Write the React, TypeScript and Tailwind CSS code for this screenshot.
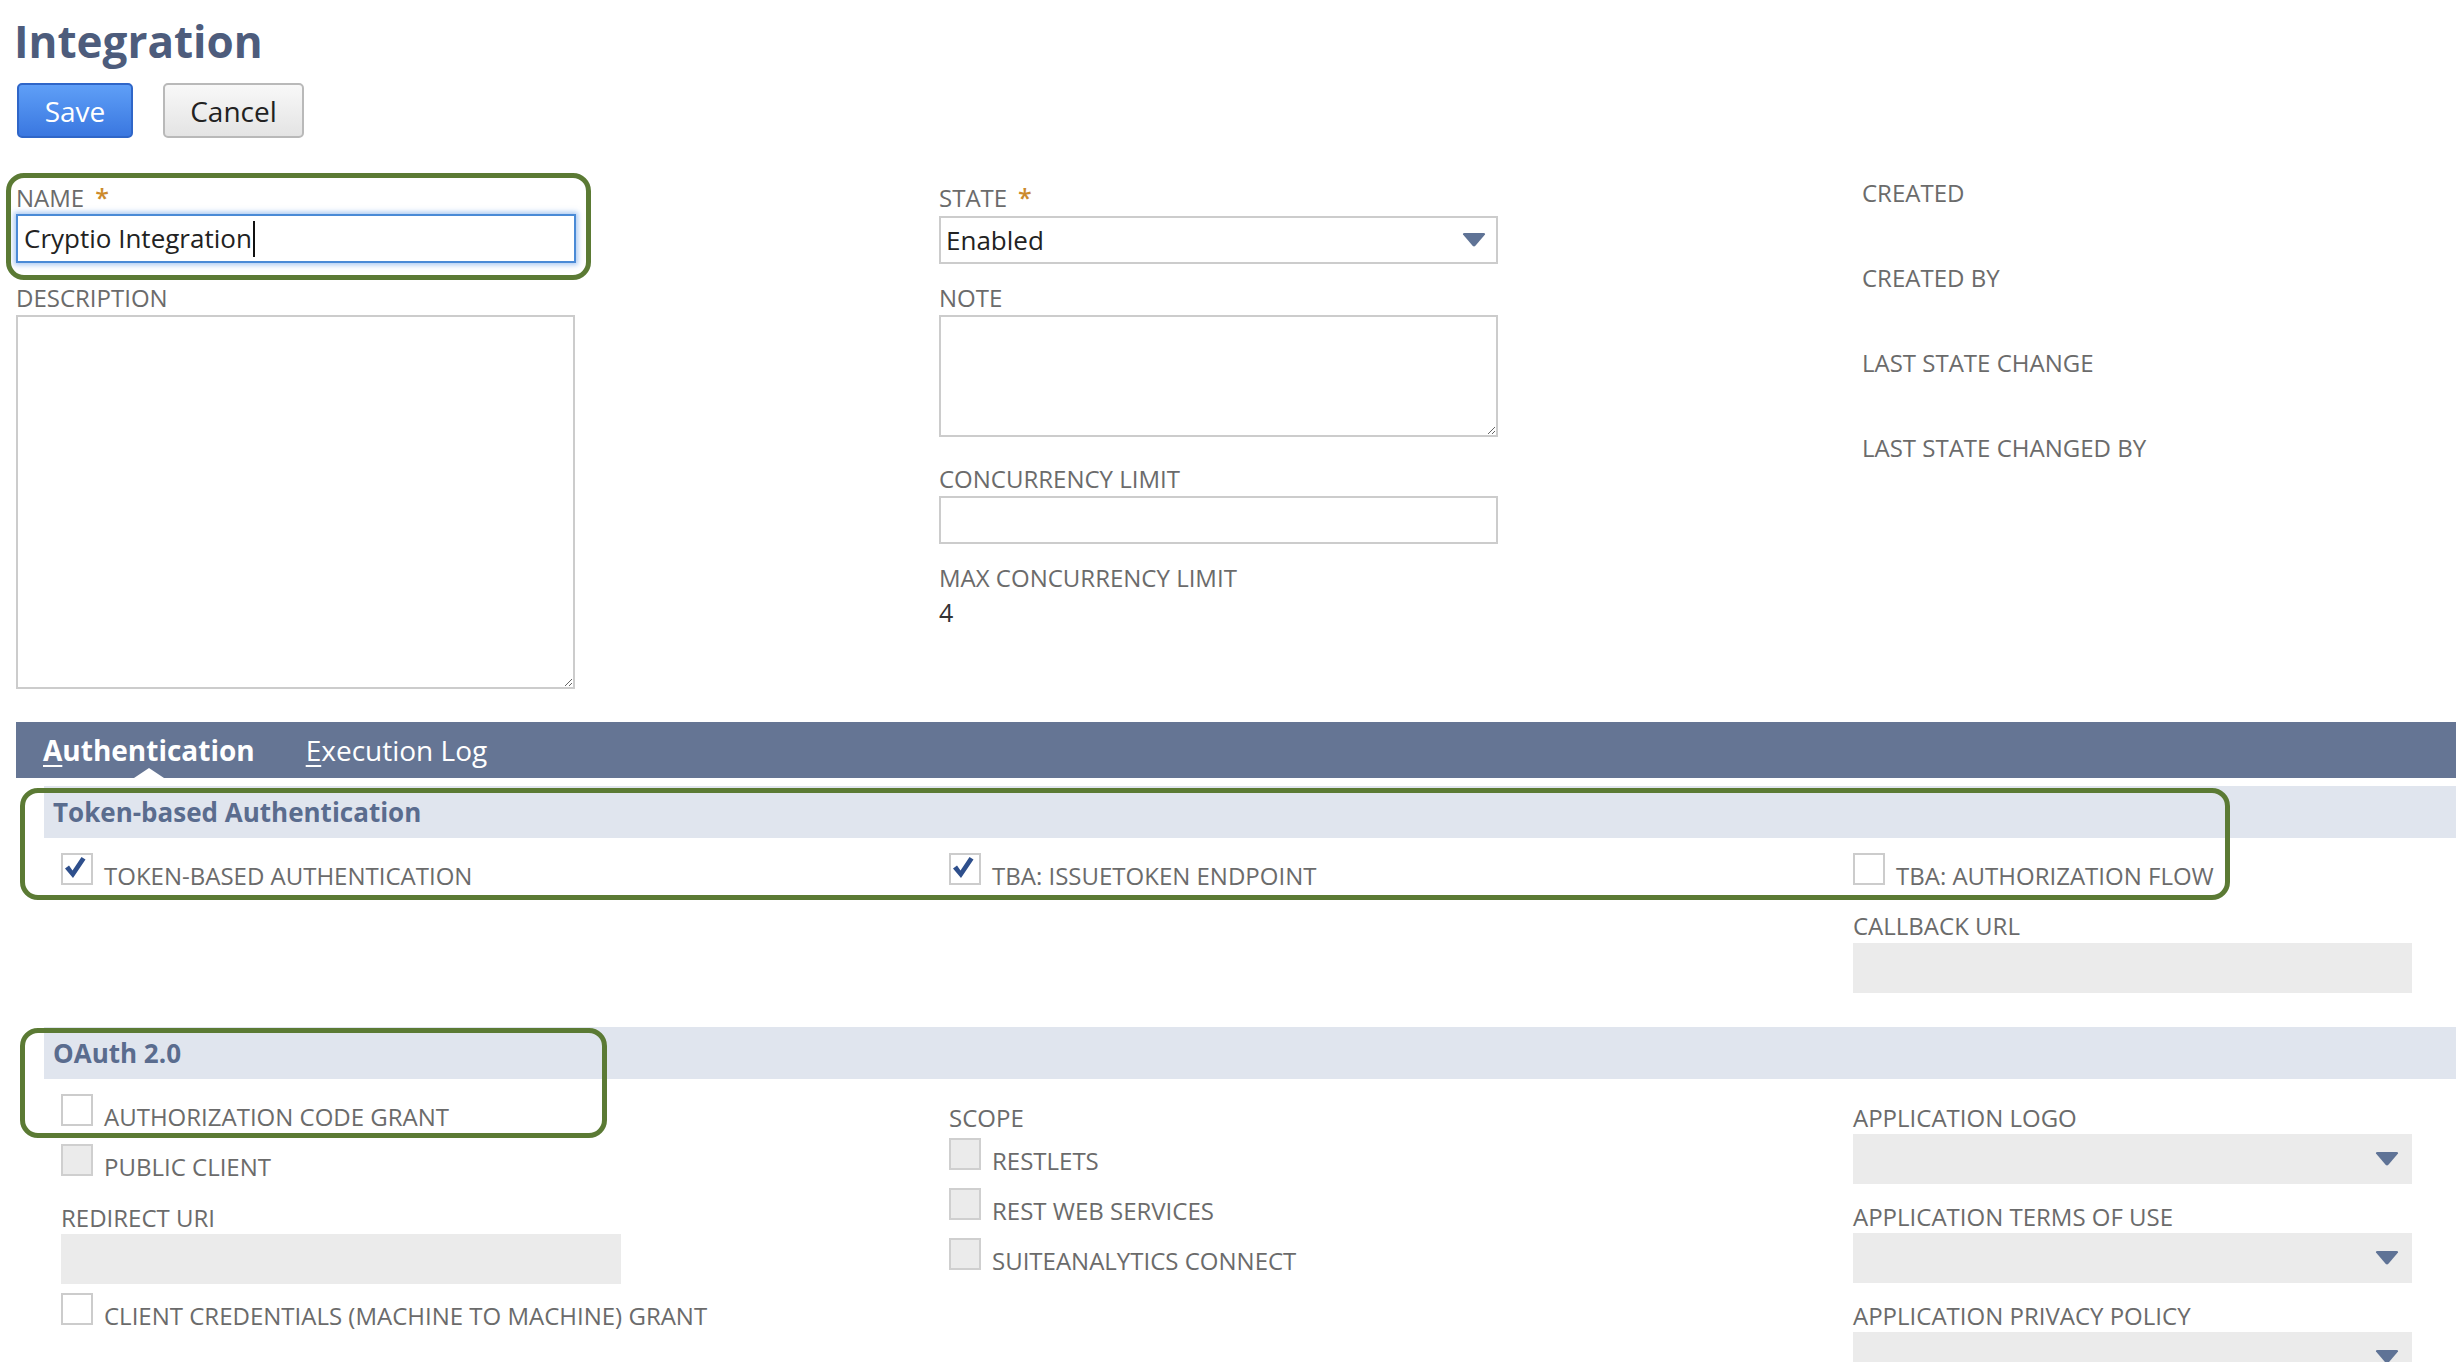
import React from 'react';

const labelCls = 'text-[24px] leading-[30px] text-[#6b6b6b] uppercase whitespace-nowrap';

function Label({ children, className = '' }: { children: React.ReactNode; className?: string }) {
  return <div className={`${labelCls} ${className}`}>{children}</div>;
}

function Required() {
  return <span className="ml-[11px] text-[25px] font-semibold text-[#cc8a2c]">*</span>;
}

function Arrow() {
  return (
    <svg width="24" height="14" viewBox="0 0 24 14">
      <path d="M1 1.5 Q0.5 0 2.5 0 L21.5 0 Q23.5 0 23 1.5 L13.4 12.8 Q12 14.2 10.6 12.8 Z" fill="#5f7396" />
    </svg>
  );
}

function Checkbox({ checked = false, disabled = false }: { checked?: boolean; disabled?: boolean }) {
  return (
    <div
      className={`relative h-[32px] w-[32px] shrink-0 border-2 ${
        disabled ? 'border-[#cfcfcf] bg-[#ebebeb]' : 'border-[#cccccc] bg-white'
      }`}
    >
      {checked ? (
        <svg className="absolute left-0 top-0" width="28" height="28" viewBox="0 0 28 28">
          <path d="M2 13.5 L6 10.5 L9.5 15.5 L18.5 2 L22.5 4.5 L10 23 Z" fill="#2e4f8c" />
        </svg>
      ) : null}
    </div>
  );
}

function CheckRow({
  label,
  checked,
  disabled,
  className = '',
}: {
  label: string;
  checked?: boolean;
  disabled?: boolean;
  className?: string;
}) {
  return (
    <div className={`flex items-end ${className}`}>
      <Checkbox checked={checked} disabled={disabled} />
      <span className="ml-[11px] text-[24px] leading-[18px] text-[#6b6b6b] uppercase whitespace-nowrap">
        {label}
      </span>
    </div>
  );
}

function GraySelect({ className = '' }: { className?: string }) {
  return (
    <div className={`flex h-[50px] w-[559px] items-center justify-end bg-[#ebebeb] pr-[13px] ${className}`}>
      <Arrow />
    </div>
  );
}

function SectionHeader({ title }: { title: string }) {
  return (
    <div className="ml-[44px] flex h-[52px] items-center bg-[#e0e5ee] pl-[9px] text-[26px] font-bold text-[#5a6c8e]">
      {title}
    </div>
  );
}

export default function App() {
  return (
    <div className="min-h-screen overflow-hidden bg-white pt-[11px] font-['Open_Sans',sans-serif]">
      <h1 className="h-[60px] pl-[14px] text-[44px] font-bold leading-[60px] text-[#4d5c7c]">Integration</h1>

      <div className="mt-[12px] flex h-[55px] gap-[30px] pl-[17px]">
        <button className="h-[55px] w-[116px] rounded-[5px] border-2 border-[#2f66c8] bg-gradient-to-b from-[#5f9ff7] to-[#3a77e0] text-[28px] text-white">
          Save
        </button>
        <button className="h-[55px] w-[141px] rounded-[5px] border-2 border-[#b9b9b9] bg-gradient-to-b from-[#f8f8f8] to-[#e4e4e4] text-[28px] text-[#222]">
          Cancel
        </button>
      </div>

      {/* main fields */}
      <div className="relative mt-[35px] flex">
        <div className="pointer-events-none absolute left-[6px] top-0 h-[107px] w-[585px] rounded-[18px] border-[5px] border-[#5b7a34]" />

        <div className="w-[939px] pl-[16px] pt-[9px]">
          <Label>
            Name
            <Required />
          </Label>
          <div className="mt-[1px] flex h-[49px] w-[560px] items-center border-2 border-[#4a8ad6] bg-white pl-[6px] text-[26px] text-[#222] shadow-[0_0_5px_2px_rgba(100,155,230,0.55)]">
            <span>Cryptio Integration</span>
            <span className="ml-[1px] h-[36px] w-[2px] bg-[#111]" />
          </div>
          <Label className="mt-[20px]">Description</Label>
          <textarea readOnly className="mt-[2px] block h-[374px] w-[559px] border-2 border-[#cccccc] bg-white outline-none" />
        </div>

        <div className="w-[923px] pt-[9px]">
          <Label>
            State
            <Required />
          </Label>
          <div className="mt-[3px] flex h-[48px] w-[559px] items-center justify-between border-2 border-[#cccccc] pl-[5px] pr-[10px] text-[26px] text-[#222]">
            <span>Enabled</span>
            <Arrow />
          </div>
          <Label className="mt-[19px]">Note</Label>
          <textarea readOnly className="mt-[2px] block h-[122px] w-[559px] border-2 border-[#cccccc] bg-white outline-none" />
          <Label className="mt-[27px]">Concurrency Limit</Label>
          <div className="mt-[2px] h-[48px] w-[559px] border-2 border-[#cccccc] bg-white" />
          <Label className="mt-[19px]">Max Concurrency Limit</Label>
          <div className="mt-[4px] text-[25px] leading-[30px] text-[#333]">4</div>
        </div>

        <div className="flex-1 pt-[5px]">
          <Label>Created</Label>
          <Label className="mt-[55px]">Created By</Label>
          <Label className="mt-[55px]">Last State Change</Label>
          <Label className="mt-[55px]">Last State Changed By</Label>
        </div>
      </div>

      {/* tabs */}
      <div className="mt-[33px] ml-[16px] flex h-[56px] items-center gap-[51px] bg-[#657594] pl-[27px] text-[28px] text-white">
        <div className="relative flex h-full items-center font-bold">
          <span>
            <span className="underline decoration-2 underline-offset-[4px]">A</span>uthentication
          </span>
          <span className="absolute bottom-0 left-1/2 h-0 w-0 -translate-x-1/2 border-b-[10px] border-l-[15px] border-r-[15px] border-b-white border-l-transparent border-r-transparent" />
        </div>
        <span>
          <span className="underline decoration-2 underline-offset-[4px]">E</span>xecution Log
        </span>
      </div>

      {/* token-based auth */}
      <div className="relative mt-[8px]">
        <div className="pointer-events-none absolute left-[20px] top-[2px] h-[112px] w-[2210px] rounded-[18px] border-[5px] border-[#5b7a34]" />
        <SectionHeader title="Token-based Authentication" />
        <div className="ml-[44px] grid grid-cols-[888px_904px_559px] pl-[17px] pt-[15px]">
          <div>
            <CheckRow label="Token-based Authentication" checked />
          </div>
          <div>
            <CheckRow label="TBA: IssueToken Endpoint" checked />
          </div>
          <div>
            <CheckRow label="TBA: Authorization Flow" />
            <Label className="mt-[26px]">Callback URL</Label>
            <div className="mt-[2px] h-[50px] w-[559px] bg-[#ebebeb]" />
          </div>
        </div>
      </div>

      {/* oauth */}
      <div className="relative mt-[34px]">
        <div className="pointer-events-none absolute left-[20px] top-[1px] h-[110px] w-[587px] rounded-[18px] border-[5px] border-[#5b7a34]" />
        <SectionHeader title="OAuth 2.0" />
        <div className="ml-[44px] grid grid-cols-[888px_904px_559px] pl-[17px]">
          <div>
            <CheckRow className="mt-[15px]" label="Authorization Code Grant" />
            <CheckRow className="mt-[18px]" label="Public Client" disabled />
            <Label className="mt-[27px]">Redirect URI</Label>
            <div className="mt-[1px] h-[50px] w-[560px] bg-[#ebebeb]" />
            <CheckRow className="mt-[9px]" label="Client Credentials (Machine to Machine) Grant" />
          </div>
          <div>
            <Label className="mt-[24px]">Scope</Label>
            <CheckRow className="mt-[5px]" label="Restlets" disabled />
            <CheckRow className="mt-[18px]" label="Rest Web Services" disabled />
            <CheckRow className="mt-[18px]" label="SuiteAnalytics Connect" disabled />
          </div>
          <div>
            <Label className="mt-[24px]">Application Logo</Label>
            <GraySelect className="mt-[1px]" />
            <Label className="mt-[18px]">Application Terms of Use</Label>
            <GraySelect className="mt-[1px]" />
            <Label className="mt-[18px]">Application Privacy Policy</Label>
            <GraySelect className="mt-[1px]" />
          </div>
        </div>
      </div>
    </div>
  );
}
